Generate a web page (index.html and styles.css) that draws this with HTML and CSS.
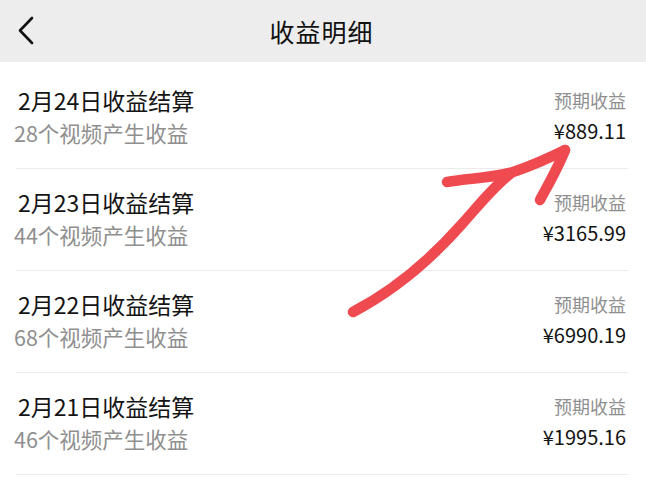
FILE: index.html
```html
<!DOCTYPE html>
<html lang="zh">
<head>
<meta charset="utf-8">
<title>收益明细</title>
<link rel="stylesheet" href="styles.css">
</head>
<body>
<div class="page">
  <header class="header">
    <div class="back">
      <svg width="20" height="30" viewBox="0 0 20 30"><polyline points="14,2 2,14.5 14,27" fill="none" stroke="#111" stroke-width="2.6" stroke-linecap="round" stroke-linejoin="round"/></svg>
    </div>
    <div class="title">收益明细</div>
    <div></div>
  </header>
  <main class="list">
    <div class="row">
      <div class="left"><div class="name">2月24日收益结算</div><div class="sub">28个视频产生收益</div></div>
      <div class="right"><div class="label">预期收益</div><div class="amount">¥889.11</div></div>
    </div>
    <div class="row">
      <div class="left"><div class="name">2月23日收益结算</div><div class="sub">44个视频产生收益</div></div>
      <div class="right"><div class="label">预期收益</div><div class="amount">¥3165.99</div></div>
    </div>
    <div class="row">
      <div class="left"><div class="name">2月22日收益结算</div><div class="sub">68个视频产生收益</div></div>
      <div class="right"><div class="label">预期收益</div><div class="amount">¥6990.19</div></div>
    </div>
    <div class="row">
      <div class="left"><div class="name">2月21日收益结算</div><div class="sub">46个视频产生收益</div></div>
      <div class="right"><div class="label">预期收益</div><div class="amount">¥1995.16</div></div>
    </div>
  </main>
  <svg class="arrow" width="646" height="485" viewBox="0 0 646 485">
    <g fill="none" stroke="#ef4a50" stroke-width="10.5" stroke-linecap="round" stroke-linejoin="round">
      <path d="M353,312 C395,290 432,258 462,224 C480,204 494,186 510,174"/>
      <path d="M447,182 C472,178 496,178 516,171 C536,164 551,157 565,150"/>
      <path d="M565,150 C558,168 548,185 540,200"/>
    </g>
  </svg>
</div>
</body>
</html>
```

FILE: styles.css
```css
html, body {
  margin: 0;
  padding: 0;
  background: #fff;
}
body {
  font-family: "Noto Sans CJK SC", "Noto Sans", sans-serif;
  color: #111;
}
.page {
  position: relative;
  width: 646px;
  height: 485px;
  overflow: hidden;
}
.header {
  height: 62px;
  background: #ededed;
  display: grid;
  grid-template-columns: 1fr auto 1fr;
  align-items: center;
}
.back {
  padding-left: 18px;
  display: flex;
  align-items: center;
}
.back svg { display: block; }
.title {
  font-size: 25px;
  letter-spacing: 1px;
  line-height: 30px;
  color: #111;
  margin-left: -3px;
}
.list {
  padding: 5px 18px 0 16px;
}
.row {
  height: 83px;
  border-bottom: 1px solid #ebebeb;
  display: flex;
  justify-content: space-between;
  padding-top: 18px;
  box-sizing: content-box;
}
.left, .right {
  display: flex;
  flex-direction: column;
}
.right { align-items: flex-end; padding-right: 2px; }
.name {
  font-size: 23px;
  line-height: 30px;
  padding-left: 2px;
  color: #141414;
}
.sub {
  font-size: 21.5px;
  line-height: 30px;
  margin-top: 3px;
  margin-left: -2px;
  color: #8f8f8f;
}
.label {
  font-size: 18px;
  line-height: 30px;
  color: #8f8f8f;
}
.amount {
  font-size: 20px;
  line-height: 26px;
  margin-top: 3px;
  color: #141414;
}
.arrow {
  position: absolute;
  left: 0;
  top: 0;
  pointer-events: none;
}
```
